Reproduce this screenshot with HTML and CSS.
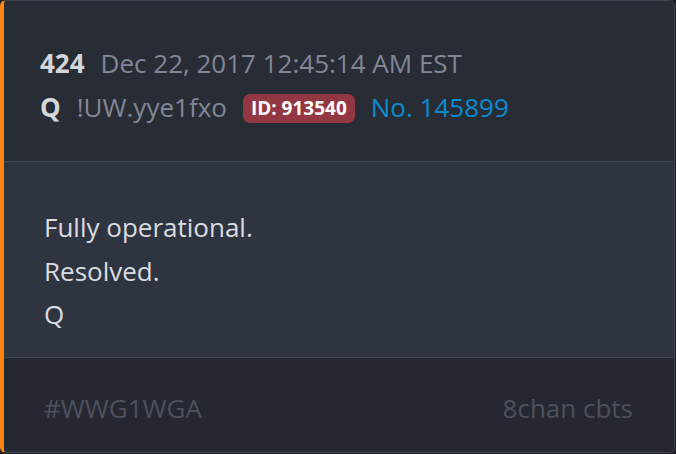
FILE: index.html
```html
<!DOCTYPE html>
<html lang="en">
<head>
    <meta charset="UTF-8">
    <title>424</title>
    <link rel="stylesheet" href="styles.css">
</head>
<body>
<div class="post">
    <div class="post-head">
        <div class="line">
            <span class="num">424</span>
            <span class="date">Dec 22, 2017 12:45:14 AM EST</span>
        </div>
        <div class="line">
            <span class="author">Q</span>
            <span class="trip">!UW.yye1fxo</span>
            <span class="uid">ID: 913540</span>
            <a class="link" href="#">No. 145899</a>
        </div>
    </div>
    <div class="post-body">
        <p>Fully operational.</p>
        <p>Resolved.</p>
        <p>Q</p>
    </div>
    <div class="post-foot">
        <span>#WWG1WGA</span>
        <span>8chan cbts</span>
    </div>
</div>
</body>
</html>
```

FILE: styles.css
```css
body {
    margin: 0;
    background: #1e2128;
    font-family: "Open Sans", "DejaVu Sans", sans-serif;
}
.post {
    width: 670px;
    height: 451px;
    border: solid 1px #3f4550;
    border-left: solid 4px #ff8412;
    border-radius: 6px;
    overflow: hidden;
    display: flex;
    flex-direction: column;
}
.post-head {
    background: #282c35;
    padding: 40px 0 0 36px;
    height: 120px;
    border-bottom: solid 1px #404652;
}
.line {
    display: flex;
    align-items: center;
    height: 44px;
    font-size: 26px;
}
.num, .author {
    font-weight: bold;
    color: #d4d6da;
    margin-right: 16px;
}
.date, .trip {
    color: #828796;
}
.uid {
    background: #933742;
    color: #fff;
    font-weight: bold;
    font-size: 19px;
    line-height: 25px;
    padding: 2px 8px;
    border-radius: 7px;
    margin: 2px 16px 0;
}
.link {
    color: #0b8bd0;
    text-decoration: none;
}
.post-body {
    background: #2f3540;
    height: 196px;
    padding: 44px 0 0 40px;
    box-sizing: border-box;
    border-bottom: solid 1px #404652;
}
.post-body p {
    margin: 0;
    font-size: 26px;
    line-height: 43.5px;
    color: #dadce0;
}
.post-foot {
    flex: 1;
    background: #252830;
    display: flex;
    justify-content: space-between;
    align-items: center;
    padding: 6px 41px 0 40px;
    font-size: 26px;
    color: #4b515c;
}
```
